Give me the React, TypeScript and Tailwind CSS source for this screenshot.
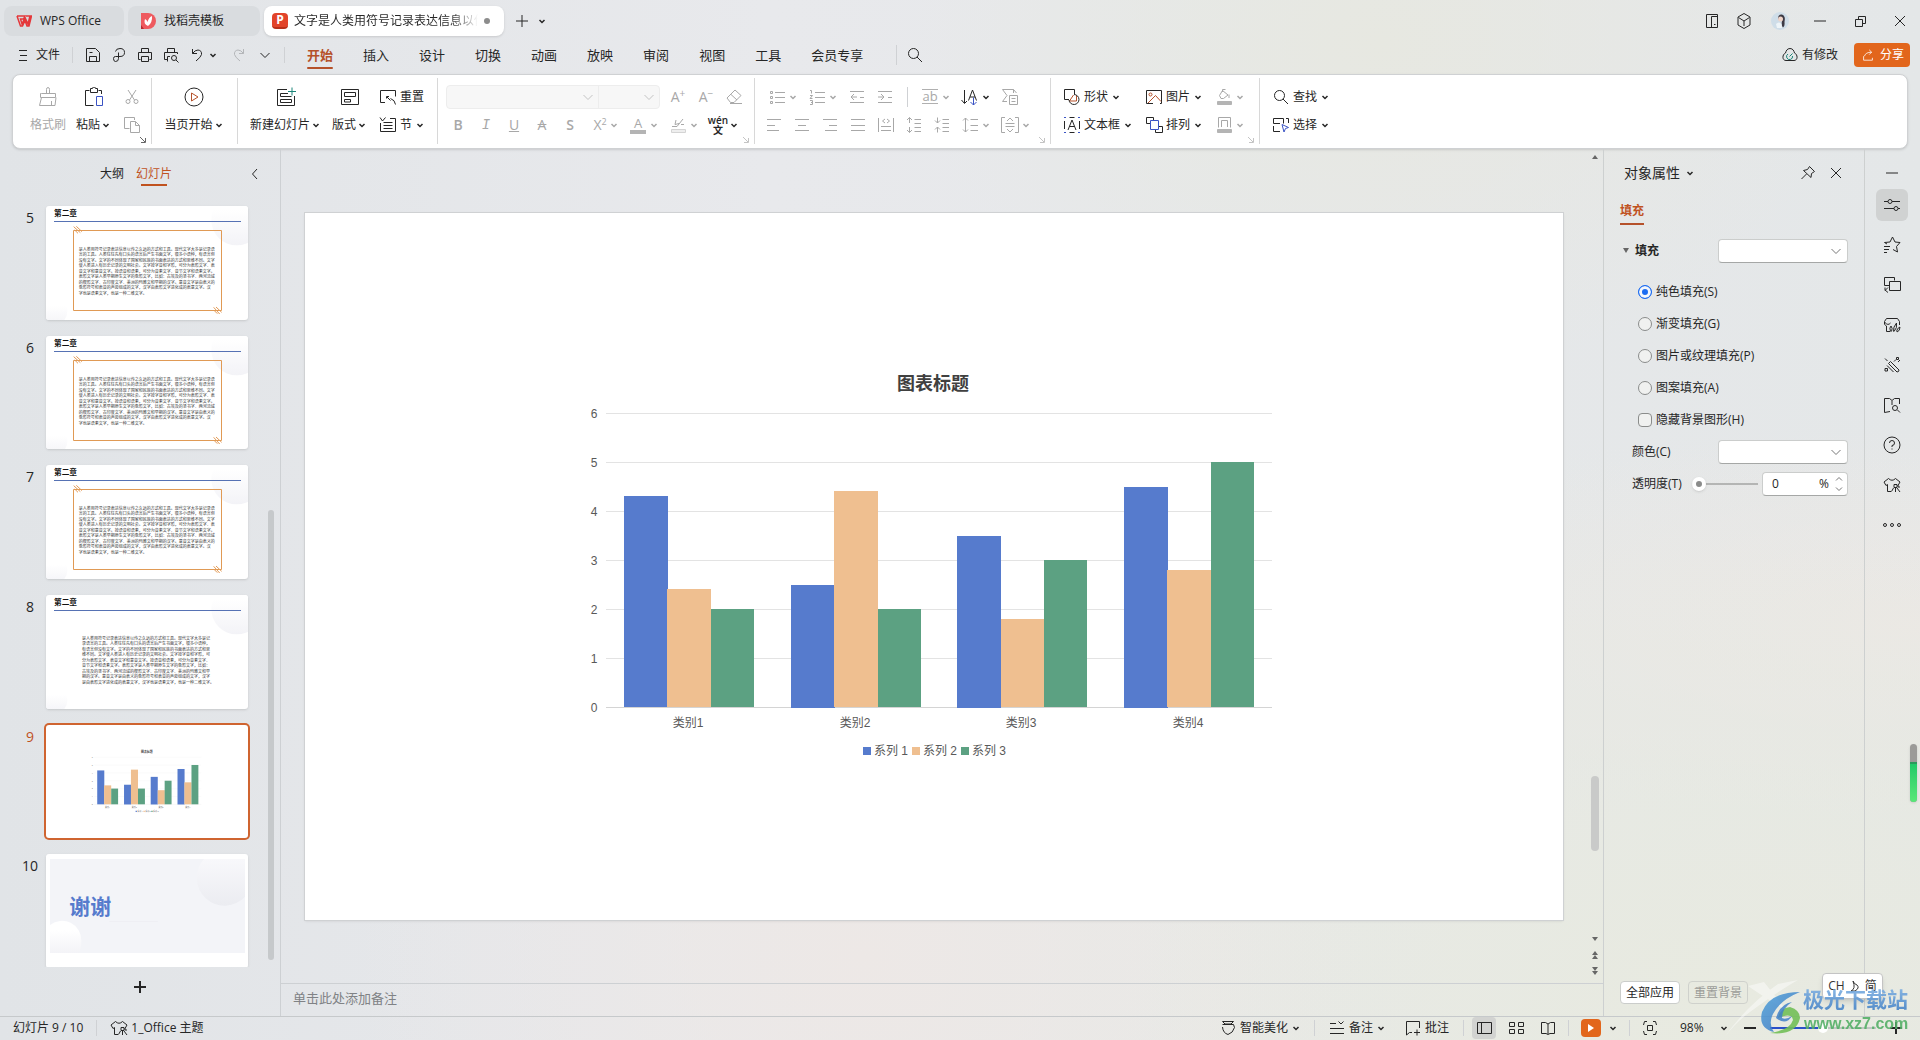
import { FC, ReactNode } from "react";
import clsx from "clsx";

type ShapeType = [string, string?, string?];

const BLUE = "#3a53c4";
const RED = "#b5512a";
const TEAL = "#1b8578";

// every icon is drawn on a 20x20 grid: [path, stroke, fill]
const icons: Record<string, ShapeType[]> = {
  menu: [["M5 5.5H13M6 10.5H13M5 15.5H13"]],
  save: [["M3.5 3.5H12.5L16.5 7.5V16.5H3.5ZM6.5 16V11.5H13.5V16M6.5 7.5H9.5"]],
  export: [["M6.500 6.500Q7 3.500 11 3.500Q15.500 3.500 15.500 7.500Q15.500 11.500 11 11.500H6.500Q4.500 11.500 4.500 13.500Q4.500 16.500 6.500 16.500Q9.500 16.500 9.500 13.500V7.500"]],
  print: [["M6.500 7.500V3.500H13.500V7.500M5.500 14.500H3.500V7.500H16.500V14.500H14.500M6.500 11.500H13.500V16.500H6.500Z"]],
  preview: [["M6.500 7.500V3.500H13.500V7.500M6.500 14.500H3.500V7.500H16.500V9M6.500 16.500V11.500H9M15 15L17.500 17.500M15.500 13A2.500 2.500 0 1 1 10.500 13A2.500 2.500 0 1 1 15.500 13"]],
  undo: [["M5.500 4V8.500H10M5.500 8.500Q8 5 11 5Q15 5.500 14.500 9.500Q14 12 9 16"]],
  redo: [["M14.500 4V8.500H10M14.500 8.500Q12 5 9 5Q5 5.500 5.500 9.500Q6 12 11 16"]],
  down: [["M5.500 8L10 12.500L14.500 8"]],
  left: [["M12 5L7.500 10L12 15"]],
  search: [["M13.500 8.500A5 5 0 1 1 3.500 8.500A5 5 0 1 1 13.500 8.500M12 12L17 17"]],
  plus: [["M10 4V16M4 10H16"]],
  minus: [["M4 10H16"]],
  close: [["M5 5L15 15M15 5L5 15"]],
  restore: [["M5.500 8.500H12.500V15.500H5.500ZM8.500 8V5.500H15.500V12.500H13"]],
  device: [["M4.500 3.500H15.500V16.500H4.500ZM9.500 16V5.500H15M12 13.500H13.500"]],
  cube: [["M10 2.500L16 6V14L10 17.500L4 14V6ZM4.500 6.500L10 10L15.500 6.500M10 10V15"]],
  cloud: [["M10 3.500C13 3.500 14 6 14.500 8C18 9.500 18 15.500 14 15.500H6C2 15.500 2 9.500 5.500 8C6 6 7 3.500 10 3.500Z"], ["M8 9A3 3 0 1 0 12.500 11M9.500 11.500L12.500 8.500", TEAL]],
  share: [["M4.500 11.500V16.500H15.500V13.500M5.500 11.500Q7 6.500 14.500 6.500M11.500 3.500L14.500 6.500L11.500 9.500"]],
  brush: [["M8.500 6V2.500A1.500 2 0 0 1 11.500 2.500V6M3.500 6.500H17.500V10.500H2.500V6.500ZM3.500 10.500L1.500 18.500H17L18 10.500M13.500 18V14"]],
  paste: [["M5.500 3.500H1.500V18.500H9.500M14.500 3.500H17.500V7M6.500 1.500V5.500H13.500V1.500H11.500A1 1 0 0 0 8.500 1.500Z"], ["M12.500 9.500H18.500V18.500H12.500Z", BLUE]],
  cut: [["M6 3L12.500 13M14 3L7.500 13M8 14.500A2 2 0 1 1 4 14.500A2 2 0 1 1 8 14.500M16 14.500A2 2 0 1 1 12 14.500A2 2 0 1 1 16 14.500"]],
  copy: [["M7.500 13.500H2.500V2.500H12.500V5M8.500 6.500H13.500L17.500 10.500V17.500H8.500ZM13.500 6.500V10.500H17.500"]],
  playCircle: [["M19 10A9 9 0 1 1 1 10A9 9 0 1 1 19 10"], ["M7.500 6V14L14 10Z", RED]],
  newSlide: [["M11 2.500H1.500V18.500H18.500V9M12 6.500H4.500V9.500H15.500M4.500 12.500H15.500V15.500H4.500Z"], ["M16 0.500V8.500M12 4.500H20", TEAL]],
  layout: [["M1.500 2.500H18.500V17.500H1.500ZM4.500 5.500H15.500V9.500H4.500ZM4.500 12.500H10.500V15H4.500Z"]],
  reset: [["M7 15.500H2.500V3.500H17.500V9.500"], ["M8.500 11.500V9.500H11M9 10L12.500 13.500M12.500 11.500Q17 13 17.500 17.500"]],
  section: [["M7.500 2.500L4.500 6L2 2.500M12 3.500H17.500V16.500H2.500V8M5.500 7.500H14.500M5.500 10.500H14.500M5.500 13.500H14.500"]],
  eraser: [["M3 11L11 3L17 8.500L10 15.500H6.500ZM7 7.500L13 13M6 16.500H18"]],
  bullets: [["M8 5.500H18M8 10.500H18M8 15.500H18M3.500 4.500H5.500V6.500H3.500ZM3.500 9.500H5.500V11.500H3.500ZM3.500 14.500H5.500V16.500H3.500Z"]],
  numbers: [["M8 5.500H18M8 10.500H18M8 15.500H18M3 3.500H4.500V6.500M3 8.500H5.500L3 11.500H5.500M3 13.500H5.500V17.500H3M4 15.500H5.500"]],
  outdent: [["M3 4.500H17M3 15.500H17M4 10H10M7 7L4 10L7 13M13 10.500H17"]],
  indent: [["M3 4.500H17M3 15.500H17M3 10H9M6 7L9 10L6 13M13 10.500H17"]],
  sortA: [["M4.500 3V16M1.500 13L4.500 16.500L7 14M8.500 13.500L12.500 3L16.500 13.500M10 10H15"], ["M13.500 10.500V18M10.500 15L13.500 18L16.500 15", BLUE]],
  smart: [["M13.500 6V2.500H2.500L7 8.500L2.500 14.500H7M9.500 8.500H17.500V17.500H9.500ZM11.500 11.500H15.500M11.500 14.500H15.500M13.500 2.500L16.500 6"]],
  alignL: [["M3 4.500H17M3 10.500H11M3 15.500H15"]],
  alignC: [["M3 4.500H17M6 10.500H14M3 15.500H17"]],
  alignR: [["M3 4.500H17M9 10.500H17M5 15.500H17"]],
  alignJ: [["M3 4.500H17M3 10.500H17M3 15.500H17"]],
  distribute: [["M2.500 3V17M17.500 3V17M9 4L6.500 6L9 8M11 4L13.500 6L11 8M5 11.500H15M5 15.500H15"]],
  spaceUp: [["M5.500 8V2.500M3 5L5.500 2.500L8 5M5.500 12V17.500M3 15L5.500 17.500L8 15M10.500 4.500H17M10.500 8.500H17M10.500 12.500H17M10.500 16.500H17"]],
  spaceDown: [["M5.500 2.500V8M3 5.500L5.500 8L8 5.500M5.500 17.500V12M3 14.500L5.500 12L8 14.500M10.500 4.500H17M10.500 8.500H17M10.500 12.500H17M10.500 16.500H17"]],
  lineSpace: [["M5.500 3V17M3 5.500L5.500 3L8 5.500M3 14.500L5.500 17L8 14.500M10.500 4.500H18M10.500 10.500H18M10.500 15.500H18"]],
  vertical: [["M5 2.500H1.500V17.500H5M15 2.500H18.500V17.500H15M5.500 8.500H14.500M5.500 11.500H14.500M7 6L10 3L13 6M7 14L10 17L13 14"]],
  shapes: [["M7 12.500H2.500V2.500H12.500V7"], ["M11.500 8L7.500 14H14.500V8.500", RED], ["M12 7.500A5 5 0 1 1 7 13"]],
  textbox: [["M7.500 2.500H12.500M7.500 17.500H12.500M2.500 6V14M17.500 6V14"], ["M6 15L10 5L14 15M7.500 11.500H12.500"], ["M2 2.500H4M16 2.500H18M2 17.500H4M16 17.500H18", BLUE]],
  picture: [["M9 16.500H2.500V3.500H17.500V16.500H16"], ["M4 16L11.500 8.500L17 14.500M8 7.500A1.500 1.500 0 1 1 5 7.500A1.500 1.500 0 1 1 8 7.500", RED]],
  arrange: [["M6 8.500H2.500V2.500H9.500V5M15 11.500H18.500V17.500H11.500V15"], ["M6.500 5.500H14.500V14.500H6.500Z", BLUE]],
  fill: [["M8.500 3.500L14 8L9.500 11.500H7L5.500 8.500ZM8.500 5V2.500H11.500M15 7.500V11"], ["M3.500 14.500H17.500V17.500H3.500Z", "#b4b4b4", "#b4b4b4"]],
  outline: [["M4.500 12.500V2.500H16.500V12.500M7.500 12V5.500H13.500V12"], ["M3.500 14.500H17.500V17.500H3.500Z", "#b4b4b4", "#b4b4b4"]],
  highlight: [["M4 11.500H9L15 4M8 5L7 9.500L11 8.500M13 9.500H16"], ["M3.500 14.500H17.500V17.500H3.500Z", "#d4d4d4", "#eeeeee"]],
  select: [["M9 8.500H2.500V3.500H12.500V8.500M15 3.500H17.500V8M2.500 11V16.500H9"], ["M11 9.500L17.500 12.500L14.500 13.500L13 17Z", BLUE]],
  pin: [["M11.500 3.500L16.500 8.500L13.500 10.500L13 14.500L5.500 7.500L9.500 6.500ZM8.500 11L3.500 16"]],
  sliders: [["M2 6.500H6M10 6.500H18M8 4.500A2 2 0 1 0 8 8.500A2 2 0 1 0 8 4.500M2 13.500H12M16 13.500H18M14 11.500A2 2 0 1 0 14 15.500A2 2 0 1 0 14 11.500"]],
  star: [["M5 9L2.500 7.500L8 7L10.500 2L13 7L18 7.500L14.500 11.500L15.500 17L11 14.500M2 11.500H8M2 14.500H7M2 17.500H5"]],
  switch: [["M7 10.500H2.500V2.500H12.500V5.500M7.500 6.500H18.500V15.500H7.500ZM3 12.500V15L6 17.500M3 15.500L6 12.500"]],
  gallery: [["M8 16.500H4.500V11Q1.500 10 2.500 6.500L4.500 3.500H15.500L17.500 6.500V10M3 7.500Q6 11 8.500 8M8.500 16.500Q7 12.500 9 11Q11 13 9.500 16.500M11.500 16.500Q11 12 14.500 8Q15.500 13 12 16.500M14.500 16.500Q15 13 18 12Q18 16 15 17"]],
  magic: [["M8.500 6.500L17 15Q17 17 15 17L6.500 8.500ZM5 10.500L11.500 17M3 3.500L5.500 6M14.500 2.500H16.500V4.500H14.500ZM16 7L18 5M3 13.500H5.500V16H3ZM12 6.500L14 4.500"]],
  book: [["M8 16.500L2.500 17.500V3.500L7.500 3.500L10 5.500L12.500 3.500H17.500V9M10 6V10M15.500 13A2.500 2.500 0 1 1 10.500 13A2.500 2.500 0 1 1 15.500 13M15.500 15L18 17.500"]],
  help: [["M18 10A8 8 0 1 1 2 10A8 8 0 1 1 18 10M7.500 8A2.500 2.500 0 1 1 10 10.500V12M10 13.500V14.500"]],
  shirt: [["M9 16.500H5.500V9.500L4 10.500L2 7L6.500 3.500Q10 7 13.500 3.500L18 7L16 10.500M12 9.500H15V12.500H12ZM11.500 13L9.500 16.500M13.500 13V17M15 13L18 17M16 10V12H18"]],
  dots: [["M4.500 10A1.500 1.500 0 1 1 1.500 10A1.500 1.500 0 1 1 4.500 10M11.500 10A1.500 1.500 0 1 1 8.500 10A1.500 1.500 0 1 1 11.500 10M18.500 10A1.500 1.500 0 1 1 15.500 10A1.500 1.500 0 1 1 18.500 10"]],
  beautify: [["M7 6L4.500 3.500H15.500L13 6ZM4.500 6.500H15.500L16.500 9.500Q15 15 10 16.500Q5 15 4.500 9"]],
  notes: [["M3 5.500H9M3 10.500H17M3 15.500H17M11.500 3.500L14 6L16.500 3.500"]],
  comment: [["M9 14.500H6.500L3.500 17V3.500H16.500V10M14 11.500V17.500M11 14.500H17"]],
  normal: [["M3.500 4.500H17.500V15.500H3.500ZM7.500 5V15"]],
  grid: [["M3.500 4.500H8.500V8.500H3.500ZM12.500 4.500H17.500V8.500H12.500ZM3.500 11.500H8.500V15.500H3.500ZM12.500 11.500H17.500V15.500H12.500Z"]],
  read: [["M10 6L7.500 4.500H3.500V15.500H8L10 16.500L12 15.500H16.500V4.500H12.500ZM10 6V16"]],
  fit: [["M7 3.500H4.500L3.500 7M13 3.500H15.500L16.500 7M7 16.500H4.500L3.500 13M13 16.500H15.500L16.500 13M7.500 7.500H12.500V12.500H7.500Z"]],
};

type IcProps = { name: string; className?: string; bold?: boolean };

const Ic: FC<IcProps> = ({ name, className = "size-5", bold }) => (
  <svg viewBox="0 0 20 20" className={clsx("shrink-0", className)} aria-hidden>
    {icons[name].map(([d, stroke = "currentColor", fill = "none"], i) => (
      <path key={i} d={d} stroke={stroke} fill={fill} strokeWidth={bold ? 2 : 1} />
    ))}
  </svg>
);

const Caret: FC = () => (
  <svg viewBox="0 0 12 12" className="size-3 shrink-0" aria-hidden>
    <path d="M3.500 5L6 7.500L8.500 5" stroke="currentColor" strokeWidth="1.500" fill="none" />
  </svg>
);

const Launcher: FC<{ dark?: boolean }> = ({ dark }) => (
  <svg
    viewBox="0 0 8 8"
    className={clsx("absolute bottom-0 right-1 size-2", dark ? "text-[#666]" : "text-[#c4c4c4]")}
    aria-hidden
  >
    <path d="M1 1L6 6M6.500 2V6.500H2" stroke="currentColor" fill="none" />
  </svg>
);

type ToolProps = {
  label: string;
  icon?: string;
  children?: ReactNode;
  text?: string;
  caret?: boolean;
  off?: boolean;
};

const Tool: FC<ToolProps> = ({ label, icon, children, text, caret, off }) => (
  <button
    type="button"
    aria-label={label}
    className={clsx("flex h-5 items-center", off ? "text-[#a8a8a8]" : "text-[#262626]")}
  >
    {icon ? <Ic name={icon} /> : <span className="flex w-5 justify-center">{children}</span>}
    {text && <span className="mx-[2px]">{text}</span>}
    {caret && <Caret />}
  </button>
);

const BigTool: FC<{ icon: string; text: string; caret?: boolean; off?: boolean }> = ({ icon, text, caret, off }) => (
  <button
    type="button"
    className={clsx("flex flex-col items-center gap-2", off ? "text-[#a8a8a8]" : "text-[#262626]")}
  >
    <Ic name={icon} />
    <span className="flex h-5 items-center">
      <span>{text}</span>
      {caret && <Caret />}
    </span>
  </button>
);

const Sep: FC<{ className?: string }> = ({ className = "h-4" }) => (
  <span className={clsx("w-px shrink-0 bg-[#cfd1d4]", className)} />
);

const colors = ["#567bcd", "#efbf90", "#5ca182"];
const values = [
  [4.3, 2.4, 2],
  [2.5, 4.4, 2],
  [3.5, 1.8, 3],
  [4.5, 2.8, 5],
];

// base line sits at y=494, one unit is 49 high
const Chart: FC<{ className?: string }> = ({ className }) => (
  <svg viewBox="0 0 1258 707" className={clsx("block w-full", className)} role="img" aria-label="图表标题">
    <text x="628" y="177" textAnchor="middle" fontSize="18" fontWeight="700" fill="#404040">
      图表标题
    </text>
    {[0, 1, 2, 3, 4, 5, 6].map((n) => (
      <g key={n}>
        <path d={`M301 ${494.5 - n * 49}H967`} stroke={n ? "#e3e3e3" : "#d4d4d4"} />
        <text x="289" y={499 - n * 49} textAnchor="middle" fontSize="12" fill="#595959">
          {n}
        </text>
      </g>
    ))}
    {values.map((group, i) => (
      <g key={i}>
        {group.map((v, j) => (
          <rect
            key={j}
            x={Math.round(319 + i * 166.7 + j * 43.4)}
            y={Math.round(494 - v * 49)}
            width={j === 2 ? 43 : 44}
            height={Math.round(v * 49)}
            fill={colors[j]}
          />
        ))}
        <text x={Math.round(383 + i * 166.7)} y="514" textAnchor="middle" fontSize="12" fill="#595959">
          类别{i + 1}
        </text>
      </g>
    ))}
    {colors.map((c, i) => (
      <g key={c}>
        <rect x={558 + i * 49} y="534" width="8" height="8" fill={c} />
        <text x={569 + i * 49} y="542" fontSize="12" fill="#595959">
          系列 {i + 1}
        </text>
      </g>
    ))}
  </svg>
);

const linesBoxed = [
  "是人类用符号记录表达信息以传之久远的方式和工具。现代文字大多是记录语",
  "言的工具。人类往往先有口头的语言后产生书面文字，很多小语种，有语言但",
  "没有文字。文字的不同体现了国家和民族的书面表达的方式和思维不同。文字",
  "使人类进入有历史记录的文明社会。文字按字音和字形，可分为表形文字、表",
  "音文字和意音文字。按语音和语素，可分为音素文字、音节文字和语素文字。",
  "表形文字是人类早期原生文字的象形文字，比如：古埃及的圣书字、两河流域",
  "的楔形文字、古印度文字、美洲的玛雅文和早期的汉字。意音文字是由表义的",
  "象形符号和表音的声旁组成的文字，汉字由表形文字进化成的表意文字。汉",
  "字也是语素文字，也是一种二维文字。",
];

const linesPlain = [
  "是人类用符号记录表达信息以传之久远的方式和工具。现代文字大多是记",
  "录语言的工具。人类往往先有口头的语言后产生书面文字，很多小语种，",
  "有语言但没有文字。文字的不同体现了国家和民族的书面表达的方式和思",
  "维不同。文字使人类进入有历史记录的文明社会。文字按字音和字形，可",
  "分为表形文字、表音文字和意音文字。按语音和语素，可分为音素文字、",
  "音节文字和语素文字。表形文字是人类早期原生文字的象形文字，比如：",
  "古埃及的圣书字、两河流域的楔形文字、古印度文字、美洲的玛雅文和早",
  "期的汉字。意音文字是由表义的象形符号和表音的声旁组成的文字，汉字",
  "是由表形文字进化成的表意文字，汉字也是语素文字，也是一种二维文字。",
];

const BallFill: FC = () => (
  <defs>
    <linearGradient id="ball" x1="0" y1="0" x2="0" y2="1">
      <stop offset="0.3" stopColor="#fff" />
      <stop offset="1" stopColor="#f3f3f7" />
    </linearGradient>
    <linearGradient id="ballDark" x1="0" y1="0" x2="0" y2="1">
      <stop offset="0" stopColor="#f8f8fb" />
      <stop offset="1" stopColor="#ebecf1" />
    </linearGradient>
  </defs>
);

const TextSlide: FC<{ boxed?: boolean }> = ({ boxed }) => (
  <svg viewBox="0 0 606 342" className="block w-full">
    <BallFill />
    <circle cx="572" cy="42" r="76" fill="url(#ball)" />
    <circle cx="22" cy="316" r="42" fill="url(#ball)" />
    <text x="24" y="31" fontSize="23" fontWeight="700" fill="#111">
      第二章
    </text>
    <path d="M24 46.5H585" stroke="#5672b4" strokeWidth="3" />
    {boxed && (
      <>
        <path d="M82.5 73.5H526.5V313.5H82.5Z" stroke="#e09a55" strokeWidth="3" fill="none" />
        <path
          d="M83 62L103 80M91 61L108 77M86 72L96 82M503 304L521 324M510 303L527 319M505 314L514 323"
          stroke="#e39a55"
          strokeWidth="3"
        />
      </>
    )}
    {(boxed ? linesBoxed : linesPlain).map((line, i) => (
      <text key={i} x={boxed ? 98 : 108} y={134 + i * 16.5} fontSize="12" fill="#333">
        {line}
      </text>
    ))}
  </svg>
);

const ThanksSlide: FC = () => (
  <svg viewBox="0 0 606 342" className="block w-full">
    <BallFill />
    <path d="M12 15H597V297H12Z" fill="#f3f4f8" />
    <path d="M474 15H597V128A76 76 0 0 1 474 15Z" fill="url(#ballDark)" />
    <path d="M12 213A58 58 0 0 1 106 260Q106 285 98 297H12Z" fill="url(#ball)" />
    <path d="M190 202.5H335" stroke="#e6e7ec" />
    <text x="70" y="180" fontSize="63" fontWeight="700" fill="#567bcd">
      谢谢
    </text>
  </svg>
);

const slides = [
  { id: 5, el: <TextSlide boxed /> },
  { id: 6, el: <TextSlide boxed /> },
  { id: 7, el: <TextSlide boxed /> },
  { id: 8, el: <TextSlide /> },
  { id: 9, el: <Chart />, active: true },
  { id: 10, el: <ThanksSlide /> },
];

const TitleBar: FC = () => (
  <header className="flex h-10 shrink-0 items-center justify-between pl-1 pt-[2px]">
    <div className="flex items-center gap-1">
      <button type="button" className="flex h-[30px] w-[120px] items-center gap-2 rounded-lg bg-[#d9dcdf] px-3">
        <svg viewBox="0 0 16 12" className="h-3 w-4" aria-hidden>
          <path d="M1 1H9L7.500 4H4.500L6 9L9 2.500L12 9L14 1H10M1 1L4.500 11H6.500L9 5.500L11 11H13L15.500 1H13" stroke="#e4373a" strokeWidth="1.500" fill="none" />
        </svg>
        WPS Office
      </button>
      <button type="button" className="flex h-[30px] w-[132px] items-center gap-2 rounded-lg bg-[#d9dcdf] px-3">
        <svg viewBox="0 0 16 16" className="size-4" aria-hidden>
          <path d="M1 0H8A8 8 0 0 1 8 16H1Z" fill="#ee5a5f" />
          <path d="M1 12L4 16H1Z" fill="#b8282e" />
          <path d="M8 13Q3 11 5 6Q7 7 7.500 9Q9 4 12 3Q12.500 10 8 13Z" fill="#fff" />
        </svg>
        找稻壳模板
      </button>
      <button type="button" className="flex h-[30px] w-[240px] items-center rounded-lg bg-white px-2 shadow-sm">
        <span className="flex size-4 shrink-0 items-center justify-center rounded-sm border-b-2 border-[#b8301a] bg-[#e2442a] font-bold text-white">
          P
        </span>
        <span className="ml-[6px] w-[184px] overflow-hidden whitespace-nowrap bg-linear-to-r from-[#262626] from-85% to-white bg-clip-text text-left text-transparent">
          文字是人类用符号记录表达信息以传
        </span>
        <span className="ml-[6px] size-[6px] rounded-full bg-[#8c8c8c]" />
      </button>
      <button type="button" aria-label="新建" className="ml-1">
        <Ic name="plus" />
      </button>
      <button type="button" aria-label="标签列表">
        <Caret />
      </button>
    </div>
    <div className="flex items-center">
      <button type="button" aria-label="设备" className="mr-3">
        <Ic name="device" />
      </button>
      <button type="button" aria-label="应用" className="mr-4">
        <Ic name="cube" />
      </button>
      <button type="button" aria-label="账号" className="mr-[10px]">
        <svg viewBox="0 0 20 20" className="size-5" aria-hidden>
          <circle cx="10" cy="10" r="9" fill="#cfdde8" />
          <path d="M8 8Q8 3 12 3.500Q16 5 14.500 11Q15 15 13 16.500Q11 14 12 10Z" fill="#3d3a44" />
          <circle cx="10.5" cy="8" r="2.500" fill="#efd4c9" />
          <path d="M6 13Q9 10 11.500 13L12 17H7Z" fill="#eef4f8" />
        </svg>
      </button>
      <button type="button" aria-label="最小化" className="flex w-10 justify-center">
        <Ic name="minus" />
      </button>
      <button type="button" aria-label="还原" className="flex w-10 justify-center">
        <Ic name="restore" />
      </button>
      <button type="button" aria-label="关闭" className="flex w-10 justify-center">
        <Ic name="close" />
      </button>
    </div>
  </header>
);

const menus = ["插入", "设计", "切换", "动画", "放映", "审阅", "视图", "工具", "会员专享"];

const MenuBar: FC = () => (
  <nav className="flex h-[34px] shrink-0 items-start justify-between pl-[14px] pr-[10px]">
    <div className="flex h-[30px] items-center">
      <button type="button" className="flex items-center gap-[2px]">
        <Ic name="menu" />
        文件
      </button>
      <Sep className="ml-3 mr-[10px] h-4" />
      <div className="flex items-center gap-[6px]">
        <button type="button" aria-label="保存"><Ic name="save" /></button>
        <button type="button" aria-label="输出"><Ic name="export" /></button>
        <button type="button" aria-label="打印"><Ic name="print" /></button>
        <button type="button" aria-label="打印预览"><Ic name="preview" /></button>
        <button type="button" aria-label="撤销" className="mr-1 flex items-center">
          <Ic name="undo" />
          <Caret />
        </button>
        <button type="button" aria-label="恢复" className="text-[#b4b6b9]"><Ic name="redo" /></button>
        <button type="button" aria-label="更多"><Ic name="down" /></button>
      </div>
      <Sep className="ml-[9px] mr-[22px] h-4" />
      <div className="flex gap-[30px] text-[13px]">
        <button type="button" className="relative font-bold text-[#b5512a]">
          开始
          <span className="absolute inset-x-0 -bottom-1 h-[2px] rounded bg-[#b5512a]" />
        </button>
        {menus.map((el) => (
          <button key={el} type="button">
            {el}
          </button>
        ))}
      </div>
      <Sep className="ml-[33px] mr-2 h-5" />
      <button type="button" aria-label="搜索">
        <Ic name="search" />
      </button>
    </div>
    <div className="flex h-[30px] items-center gap-4">
      <button type="button" className="flex items-center gap-[2px]">
        <Ic name="cloud" />
        有修改
      </button>
      <button type="button" className="flex h-6 w-14 items-center justify-center gap-1 rounded bg-[#e2661c] text-white">
        <Ic name="share" className="size-4" />
        分享
      </button>
    </div>
  </nav>
);

const Group: FC<{ children: ReactNode; className?: string }> = ({ children, className }) => (
  <div className={clsx("relative flex h-[66px] items-center border-r border-[#d8d8d8]", className)}>{children}</div>
);

const Ribbon: FC = () => (
  <section className="mx-3 flex h-[75px] shrink-0 items-center rounded-lg border border-[#cfd1d3] bg-white pb-[2px] shadow-sm">
    <Group className="w-[139px] gap-[10px] pl-[17px]">
      <BigTool icon="brush" text="格式刷" off />
      <BigTool icon="paste" text="粘贴" caret />
      <div className="flex flex-col gap-2">
        <Tool label="剪切" icon="cut" off />
        <Tool label="复制" icon="copy" off />
      </div>
      <Launcher dark />
    </Group>
    <Group className="w-[86px] justify-center">
      <BigTool icon="playCircle" text="当页开始" caret />
    </Group>
    <Group className="w-[200px] gap-[10px] pl-3">
      <BigTool icon="newSlide" text="新建幻灯片" caret />
      <BigTool icon="layout" text="版式" caret />
      <div className="flex flex-col gap-2">
        <Tool label="重置" icon="reset" text="重置" />
        <Tool label="节" icon="section" text="节" caret />
      </div>
    </Group>
    <Group className="w-[317px] pl-2">
      <div className="flex flex-col gap-1">
        <div className="flex h-6 items-center gap-2">
          <div className="flex h-6 rounded border border-[#ededed] bg-[#f7f7f7] text-[#c4c4c4]">
            <div className="relative flex w-[152px] items-center border-r border-[#ededed]">
              <select aria-label="字体" disabled className="size-full appearance-none" />
              <Ic name="down" className="absolute right-0 size-5" />
            </div>
            <div className="relative flex w-[60px] items-center">
              <select aria-label="字号" disabled className="size-full appearance-none" />
              <Ic name="down" className="absolute right-0 size-5" />
            </div>
          </div>
          <Tool label="增大字号" off>
            <span className="text-sm leading-4">A<sup className="text-[10px]">+</sup></span>
          </Tool>
          <Tool label="减小字号" off>
            <span className="text-sm leading-4">A<sup className="text-[10px]">−</sup></span>
          </Tool>
          <Tool label="清除格式" icon="eraser" off />
        </div>
        <div className="flex h-6 items-center gap-2 pl-[2px] text-sm">
          <Tool label="加粗" off><b className="font-semibold">B</b></Tool>
          <Tool label="倾斜" off><i className="font-mono">I</i></Tool>
          <Tool label="下划线" off><span className="underline">U</span></Tool>
          <Tool label="删除线" off><span className="line-through">A</span></Tool>
          <Tool label="阴影" off><span className="font-semibold">S</span></Tool>
          <Tool label="上标" caret off>
            <span className="ml-1 leading-4">X<sup className="text-[9px]">2</sup></span>
          </Tool>
          <Tool label="字体颜色" caret off>
            <span className="h-[18px] w-4 border-b-4 border-[#b4b4b4] text-[13px] leading-[14px]">A</span>
          </Tool>
          <Tool label="突出显示" icon="highlight" caret off />
          <Tool label="拼音指南" caret>
            <span className="flex flex-col items-center text-[10px] font-semibold leading-[10px]">
              <span>wén</span>
              <span>文</span>
            </span>
          </Tool>
        </div>
      </div>
      <Launcher />
    </Group>
    <Group className="w-[296px] pl-[9px]">
      <div className="flex flex-col gap-2">
        <div className="ml-[3px] flex items-center gap-2">
          <Tool label="项目符号" icon="bullets" caret off />
          <Tool label="编号" icon="numbers" caret off />
          <Tool label="减少缩进" icon="outdent" off />
          <Tool label="增加缩进" icon="indent" off />
          <Sep className="mx-1 h-5" />
          <Tool label="文字方向" caret off>
            <span className="border-y border-[#b0b0b0] text-[13px] leading-[13px]">ab</span>
          </Tool>
          <Tool label="文字排列" icon="sortA" caret />
          <Tool label="智能图形" icon="smart" off />
        </div>
        <div className="flex items-center gap-2">
          <Tool label="左对齐" icon="alignL" off />
          <Tool label="居中" icon="alignC" off />
          <Tool label="右对齐" icon="alignR" off />
          <Tool label="两端对齐" icon="alignJ" off />
          <Tool label="分散对齐" icon="distribute" off />
          <Tool label="增大段距" icon="spaceUp" off />
          <Tool label="减小段距" icon="spaceDown" off />
          <Tool label="行距" icon="lineSpace" caret off />
          <Tool label="对齐文本" icon="vertical" caret off />
        </div>
      </div>
      <Launcher />
    </Group>
    <Group className="w-[209px] pl-[11px]">
      <div className="grid grid-cols-[82px_70px_auto] gap-y-2">
        <Tool label="形状" icon="shapes" text="形状" caret />
        <Tool label="图片" icon="picture" text="图片" caret />
        <Tool label="填充" icon="fill" caret off />
        <Tool label="文本框" icon="textbox" text="文本框" caret />
        <Tool label="排列" icon="arrange" text="排列" caret />
        <Tool label="轮廓" icon="outline" caret off />
      </div>
      <Launcher />
    </Group>
    <div className="flex flex-col gap-2 pl-[11px]">
      <Tool label="查找" icon="search" text="查找" caret />
      <Tool label="选择" icon="select" text="选择" caret />
    </div>
  </section>
);

const SlideList: FC = () => (
  <aside className="flex w-[281px] shrink-0 flex-col border-r border-[#cdd0d3]">
    <div className="flex h-[49px] shrink-0 items-center justify-between pl-[100px] pr-[15px]">
      <div className="flex gap-3">
        <button type="button">大纲</button>
        <button type="button" className="relative text-[#c0521f]">
          幻灯片
          <span className="absolute inset-x-[5px] -bottom-[2px] h-[2px] bg-[#c0521f]" />
        </button>
      </div>
      <button type="button" aria-label="收起"><Ic name="left" /></button>
    </div>
    <div className="flex min-h-0 flex-1 justify-between">
      <ul className="flex flex-col gap-4 overflow-hidden pl-[14px] pr-1 pt-2">
        {slides.map((el) => (
          <li key={el.id} className="flex shrink-0">
            <span className={clsx("w-8 pt-[2px] text-center text-sm", el.active && "text-[#c0521f]")}>{el.id}</span>
            <a
              href={`#slide-${el.id}`}
              aria-label={`幻灯片 ${el.id}`}
              className={clsx(
                "block aspect-video w-[202px] overflow-hidden rounded-[3px] bg-white",
                el.active ? "ring-2 ring-[#cf6430]" : "shadow"
              )}
            >
              {el.el}
            </a>
          </li>
        ))}
      </ul>
      <div className="flex w-3 flex-col justify-end pb-[7px]">
        <span className="h-[59%] w-[6px] rounded-full bg-[#c6c9cb]" />
      </div>
    </div>
    <div className="flex h-[49px] shrink-0 justify-center pt-[10px]">
      <button type="button" aria-label="新建幻灯片" className="h-5">
        <Ic name="plus" bold />
      </button>
    </div>
  </aside>
);

const Canvas: FC = () => (
  <main className="flex min-w-0 flex-1 flex-col">
    <div className="flex min-h-0 flex-1 pl-6">
      <div className="flex min-w-0 flex-1 items-center">
        <div className="w-full bg-white font-['Liberation_Sans','Noto_Sans_CJK_SC',sans-serif] shadow-sm ring-1 ring-[#cfd1d3]">
          <Chart />
        </div>
      </div>
      <div className="flex w-10 flex-col items-end pb-2 pr-1 pt-1 text-[#666]">
        <svg viewBox="0 0 8 8" className="size-2" aria-hidden><path d="M1 6L4 2L7 6Z" fill="currentColor" /></svg>
        <div className="flex flex-1 flex-col justify-end pb-[84px]">
          <span className="h-[75px] w-2 rounded-full bg-[#c9cac9]" />
        </div>
        <svg viewBox="0 0 8 8" className="size-2" aria-hidden><path d="M1 2L4 6L7 2Z" fill="currentColor" /></svg>
        <svg viewBox="0 0 8 8" className="mt-2 size-2" aria-hidden><path d="M1 4L4 0L7 4ZM1 8L4 4L7 8Z" fill="currentColor" /></svg>
        <svg viewBox="0 0 8 8" className="mt-2 size-2" aria-hidden><path d="M1 0L4 4L7 0ZM1 4L4 8L7 4Z" fill="currentColor" /></svg>
      </div>
    </div>
    <div className="flex h-[33px] shrink-0 items-center border-t border-[#cdd0d3] px-3 pb-1">
      <input
        aria-label="备注"
        placeholder="单击此处添加备注"
        className="w-full bg-transparent text-[13px] outline-none placeholder:text-[#808285]"
      />
    </div>
  </main>
);

const radios = ["纯色填充(S)", "渐变填充(G)", "图片或纹理填充(P)", "图案填充(A)"];

const PanelSelect: FC<{ id: string }> = ({ id }) => (
  <span className="relative">
    <select
      id={id}
      className="block h-6 w-[130px] appearance-none rounded border border-[#cbcdcc] border-b-[#a5a7a6] bg-white px-2"
    />
    <Ic name="down" className="pointer-events-none absolute right-[2px] top-[2px] size-5 text-[#777]" />
  </span>
);

const Properties: FC = () => (
  <aside className="flex w-[261px] shrink-0 flex-col border-l border-[#cdd0d0] px-4 pb-3 pt-[14px]">
    <div className="flex h-5 items-center justify-between pl-1 pr-[2px]">
      <button type="button" className="flex items-center gap-1 text-sm">
        对象属性
        <Caret />
      </button>
      <div className="flex gap-2">
        <button type="button" aria-label="固定"><Ic name="pin" /></button>
        <button type="button" aria-label="关闭面板"><Ic name="close" /></button>
      </div>
    </div>
    <button type="button" className="mt-[18px] self-start border-b-2 border-[#b5512a] pb-[2px] font-bold text-[#c0521f]">
      填充
    </button>
    <div className="mt-[14px] flex h-6 items-center justify-between">
      <label htmlFor="fill" className="flex items-center gap-[5px] pl-[2px] font-bold">
        <svg viewBox="0 0 8 8" className="size-2 text-[#666]" aria-hidden><path d="M1 1L4 6L7 1Z" fill="currentColor" /></svg>
        填充
      </label>
      <PanelSelect id="fill" />
    </div>
    <div className="mt-[19px] flex flex-col gap-3 pl-[18px]">
      {radios.map((el, i) => (
        <label key={el} className="flex h-5 items-center gap-1">
          <input
            type="radio"
            name="fillType"
            defaultChecked={i === 0}
            className="size-[14px] appearance-none rounded-full border border-[#8a8c8b] bg-[#f0f1f0] checked:border-[#1b6cf2] checked:bg-[#1b6cf2] checked:shadow-[inset_0_0_0_3px_#f4f7fc]"
          />
          {el}
        </label>
      ))}
      <label className="flex h-5 items-center gap-1">
        <input type="checkbox" className="size-[14px] appearance-none rounded-sm border border-[#8a8c8b] bg-[#f0f1f0]" />
        隐藏背景图形(H)
      </label>
    </div>
    <div className="mt-[10px] flex h-6 items-center justify-between pl-3">
      <label htmlFor="color">颜色(C)</label>
      <PanelSelect id="color" />
    </div>
    <div className="mt-2 flex h-6 items-center justify-between pl-3">
      <label htmlFor="alpha">透明度(T)</label>
      <div className="flex items-center gap-1">
        <input
          id="alpha"
          type="range"
          defaultValue={0}
          className="h-[14px] w-[66px] appearance-none bg-[linear-gradient(#b4b5b4,#b4b5b4)] bg-[length:100%_2px] bg-center bg-no-repeat [&::-webkit-slider-thumb]:size-[14px] [&::-webkit-slider-thumb]:appearance-none [&::-webkit-slider-thumb]:rounded-full [&::-webkit-slider-thumb]:border-4 [&::-webkit-slider-thumb]:border-white [&::-webkit-slider-thumb]:bg-[#8a8b8a] [&::-webkit-slider-thumb]:shadow"
        />
        <span className="flex h-6 w-[86px] items-center rounded border border-[#cbcdcc] border-b-[#a5a7a6] bg-white pl-[9px] pr-[2px]">
          <input aria-label="透明度数值" defaultValue="0" className="w-0 min-w-0 flex-1 outline-none" />
          %
          <span className="ml-1 flex flex-col text-[#777]">
            <button type="button" aria-label="增加">
              <svg viewBox="0 0 12 8" className="block h-[10px] w-3"><path d="M3 5.500L6 2.500L9 5.500" stroke="currentColor" fill="none" /></svg>
            </button>
            <button type="button" aria-label="减少">
              <svg viewBox="0 0 12 8" className="block h-[10px] w-3"><path d="M3 2.500L6 5.500L9 2.500" stroke="currentColor" fill="none" /></svg>
            </button>
          </span>
        </span>
      </div>
    </div>
    <div className="mt-auto flex gap-2">
      <button type="button" className="h-[23px] w-[60px] rounded border border-[#cbcdcb] bg-white">
        全部应用
      </button>
      <button type="button" disabled className="h-[23px] w-[60px] rounded border border-[#cfd1cc] text-[#9b9c98]">
        重置背景
      </button>
    </div>
  </aside>
);

const rail = [
  { icon: "sliders", label: "对象属性" },
  { icon: "star", label: "动画窗格" },
  { icon: "switch", label: "幻灯片切换" },
  { icon: "gallery", label: "素材" },
  { icon: "magic", label: "设计工具" },
  { icon: "book", label: "查阅" },
  { icon: "help", label: "帮助" },
  { icon: "shirt", label: "皮肤" },
  { icon: "dots", label: "更多工具" },
];

const Rail: FC = () => (
  <aside className="flex w-14 shrink-0 flex-col items-center gap-2 border-l border-[#cdd0d0] pr-[2px] pt-4">
    <button type="button" aria-label="折叠" className="flex h-4 items-center">
      <Ic name="minus" />
    </button>
    {rail.map((el, i) => (
      <button
        key={el.icon}
        type="button"
        aria-label={el.label}
        className={clsx("flex size-8 items-center justify-center rounded-md", i === 0 && "bg-[#d0d2d2]")}
      >
        <Ic name={el.icon} />
      </button>
    ))}
  </aside>
);

const StatusBar: FC = () => (
  <footer className="flex h-6 shrink-0 items-center justify-between border-t border-[#c6c9cb] pb-px pl-[13px] pr-[14px]">
    <div className="flex items-center">
      幻灯片 9 / 10
      <Sep className="ml-[13px] mr-3 h-4" />
      <button type="button" className="flex items-center gap-[2px]">
        <Ic name="shirt" />
        1_Office 主题
      </button>
    </div>
    <div className="flex items-center">
      <button type="button" className="flex items-center gap-[2px]">
        <Ic name="beautify" />
        智能美化
        <Caret />
      </button>
      <Sep className="mx-3 h-4" />
      <button type="button" className="flex items-center gap-[2px]">
        <Ic name="notes" />
        备注
        <Caret />
      </button>
      <button type="button" className="ml-4 flex items-center gap-[2px]">
        <Ic name="comment" />
        批注
      </button>
      <Sep className="ml-[14px] mr-2 h-4" />
      <div className="flex gap-2">
        <button type="button" aria-label="普通视图" className="flex h-[22px] w-6 items-center justify-center rounded bg-[#d2d3d1]">
          <Ic name="normal" />
        </button>
        <button type="button" aria-label="浏览视图" className="flex h-[22px] w-6 items-center justify-center"><Ic name="grid" /></button>
        <button type="button" aria-label="阅读视图" className="flex h-[22px] w-6 items-center justify-center"><Ic name="read" /></button>
      </div>
      <Sep className="ml-2 mr-3 h-4" />
      <button type="button" aria-label="放映" className="flex h-[18px] w-5 items-center justify-center rounded-sm bg-[#e2661c]">
        <svg viewBox="0 0 8 10" className="h-[10px] w-2"><path d="M1 1L7 5L1 9Z" fill="#fff" /></svg>
      </button>
      <button type="button" aria-label="放映选项" className="ml-[6px]"><Caret /></button>
      <Sep className="mx-[10px] h-4" />
      <button type="button" aria-label="适应窗口"><Ic name="fit" /></button>
      <button type="button" className="ml-5 flex w-[50px] items-center justify-between">
        98%
        <Caret />
      </button>
      <button type="button" aria-label="缩小" className="ml-[10px]"><Ic name="minus" bold /></button>
      <input
        type="range"
        aria-label="缩放"
        defaultValue={50}
        className="mx-[10px] h-3 w-[106px] appearance-none bg-[linear-gradient(to_right,#2b50c8_50%,#c2c6c4_50%)] bg-[length:100%_2px] bg-center bg-no-repeat [&::-webkit-slider-thumb]:size-[10px] [&::-webkit-slider-thumb]:appearance-none [&::-webkit-slider-thumb]:rounded-full [&::-webkit-slider-thumb]:bg-white"
      />
      <button type="button" aria-label="放大"><Ic name="plus" bold /></button>
    </div>
  </footer>
);

const Overlays: FC = () => (
  <>
    <div className="absolute right-[3px] top-[744px] flex h-[58px] w-[7px] flex-col overflow-hidden rounded-full bg-[#9b9a98] shadow">
      <span className="mt-auto h-10 border-t-2 border-[#2a9a5c] bg-linear-to-b from-[#1fca68] to-[#58e878]" />
    </div>
    <div className="absolute bottom-[41px] right-[37px] flex h-[26px] w-[61px] items-center justify-center gap-1 rounded border border-[#c4c4c4] bg-white text-[#333] shadow-md">
      CH
      <svg viewBox="0 0 12 12" className="size-3" aria-hidden>
        <path d="M4 1Q5 4 8 5Q11 8 6 11H2Q7 9 4 1Z" stroke="#333" fill="none" />
      </svg>
      简
    </div>
    <svg viewBox="0 0 200 64" className="pointer-events-none absolute bottom-0 right-0 h-16 w-[200px]" aria-hidden>
      <defs>
        <linearGradient id="blueInk" x1="0" y1="0" x2="0" y2="1">
          <stop offset="0" stopColor="#86b6e6" />
          <stop offset="1" stopColor="#3f7ec4" />
        </linearGradient>
        <linearGradient id="swoosh" x1="0" y1="0" x2="1" y2="1">
          <stop offset="0" stopColor="#4aa0da" />
          <stop offset="1" stopColor="#3c72c0" />
        </linearGradient>
      </defs>
      <path d="M4 62Q26 30 58 8L78 4Q60 14 30 36Q16 46 4 62ZM28 10L44 6L66 34Q48 24 28 10Z" fill="#fff" opacity="0.45" />
      <path d="M80 16Q50 16 42 36Q38 52 54 56Q48 48 53 38Q60 24 80 16Z" fill="url(#swoosh)" opacity="0.85" />
      <path d="M50 57Q70 54 73 44Q72 36 58 42Q60 32 70 31Q80 34 80 42Q76 60 50 57Z" fill="#72bf58" opacity="0.9" />
      <path d="M56 42Q60 28 72 26Q62 32 62 42Q66 44 72 40Q66 50 56 42Z" fill="#3f80c8" opacity="0.85" />
      <text x="83" y="31" fontSize="21" fontWeight="700" fill="url(#blueInk)" opacity="0.9">极光下载站</text>
      <text x="84" y="53" fontSize="16" fontWeight="700" fontFamily="Liberation Sans, sans-serif" fill="#55b068" opacity="0.9">www.xz7.com</text>
    </svg>
  </>
);

const App: FC = () => {
  return (
    <div className="relative flex h-screen w-full flex-col overflow-hidden bg-[radial-gradient(ellipse_at_72%_4%,#e7e8e1_0,transparent_24%),radial-gradient(ellipse_at_45%_92%,#ede8e6_0,transparent_34%),radial-gradient(ellipse_at_90%_96%,#e8eae0_0,transparent_40%),radial-gradient(ellipse_at_100%_60%,#ece8e6_0,transparent_22%),linear-gradient(90deg,#e1e4e7,#e8e9ec_40%,#e4e7e8)] font-['Open_Sans','Noto_Sans_CJK_SC',sans-serif] text-xs leading-5 text-[#262626]">
      <TitleBar />
      <MenuBar />
      <Ribbon />
      <div className="flex min-h-0 flex-1">
        <SlideList />
        <Canvas />
        <Properties />
        <Rail />
      </div>
      <StatusBar />
      <Overlays />
    </div>
  );
};

export default App;
